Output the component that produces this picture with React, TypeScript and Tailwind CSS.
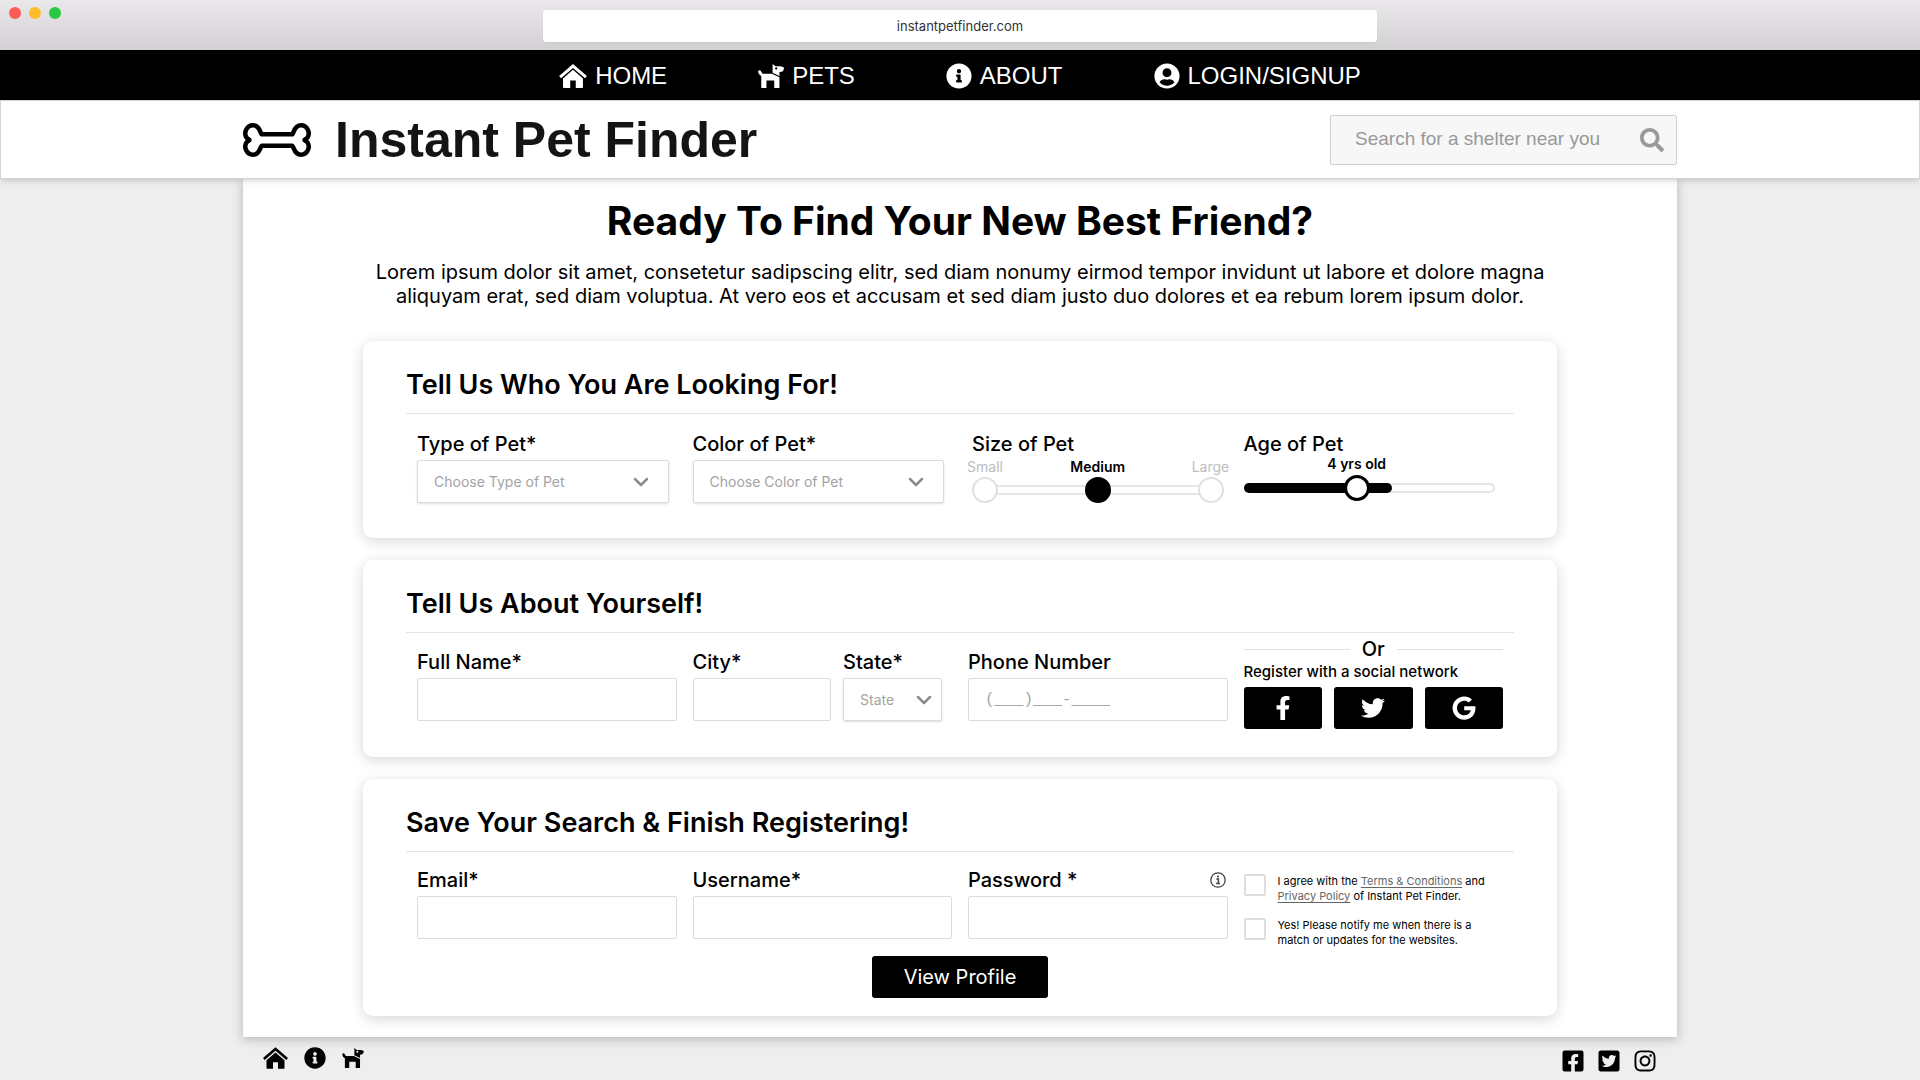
import { ReactNode } from "react";
import {
  FaFacebookF,
  FaFacebookSquare,
  FaGoogle,
  FaInfoCircle,
  FaInstagram,
  FaSearch,
  FaTwitter,
  FaTwitterSquare,
  FaUserCircle,
} from "react-icons/fa";
import { ChevronDown } from "lucide-react";

const inputClass =
  "block h-[43px] w-full rounded-xs border border-[#dcdcdc] bg-white px-4 text-base text-black placeholder:text-[#a8a8a8]";

function HouseIcon({ className }: { className?: string }) {
  return (
    <svg viewBox="0 0 30 26" className={className} fill="currentColor" aria-hidden="true">
      <path d="M15 0 0 13l2 2.4L15 4.2l13 11.2 2-2.4z" />
      <path d="M15 6.3 4.2 15.6V25q0 1 1 1H12v-8h6v8h6.800q1 0 1-1v-9.400z" />
    </svg>
  );
}

function DogIcon({ className }: { className?: string }) {
  return (
    <svg viewBox="0 0 80 74" className={className} fill="currentColor" fillRule="evenodd" aria-hidden="true">
      <path d="M2 20Q7 18 10 24L14 30H43L66 41V74H50V51H26V74H10V38Q1 32 0 24Z" />
      <path d="M45 0L54 7H70L80 11Q80 22 73 24L66 25V37L45 27ZM56 10a3.500 3.500 0 1 0 0.100 0Z" />
    </svg>
  );
}

function BoneIcon({ className }: { className?: string }) {
  return (
    <svg viewBox="0 0 68 34" className={className} fill="none" stroke="#000" strokeWidth="4.500" strokeLinejoin="round" aria-hidden="true">
      <path d="M19 11.300H49C51 11.300 50.500 2.300 58 2.300C64.500 2.300 67.500 10 64.500 14.500C63.500 16 61.500 16.500 61.500 17C61.500 17.500 63.500 18 64.500 19.500C67.500 24 64.500 31.700 58 31.700C50.500 31.700 51 22.700 49 22.700H19C17 22.700 17.500 31.700 10 31.700C3.500 31.700 0.500 24 3.500 19.500C4.500 18 6.500 17.500 6.500 17C6.500 16.500 4.500 16 3.500 14.500C0.500 10 3.500 2.300 10 2.300C17.500 2.300 17 11.300 19 11.300Z" />
    </svg>
  );
}

function InfoOutlineIcon({ className }: { className?: string }) {
  return (
    <svg viewBox="0 0 16 16" className={className} fill="none" stroke="currentColor" aria-hidden="true">
      <circle cx="8" cy="8" r="7.200" strokeWidth="1.300" />
      <path d="M6.300 7H8.400V11.300M6.100 11.500H10" strokeWidth="1.500" />
      <circle cx="8" cy="4.500" r="1.100" fill="currentColor" stroke="none" />
    </svg>
  );
}

function Card({ title, children }: { title: string; children: ReactNode }) {
  return (
    <section className="rounded-[10px] bg-white px-[43px] pt-6 pb-[18px] shadow-[0_3px_14px_rgba(0,0,0,0.16)]">
      <h3 className="text-[27px] leading-10 font-semibold">{title}</h3>
      <div className="mt-2 border-t border-[#e4e4e4] px-[11px]">{children}</div>
    </section>
  );
}

function Field({ id, label, children }: { id: string; label: string; children: ReactNode }) {
  return (
    <div>
      <label htmlFor={id} className="block text-xl leading-8 font-medium">
        {label}
      </label>
      {children}
    </div>
  );
}

function Select({ id, placeholder, compact }: { id: string; placeholder: string; compact?: boolean }) {
  return (
    <div className="relative">
      <select
        id={id}
        className="block h-[43px] w-full appearance-none rounded-xs border border-[#dcdcdc] bg-white px-4 text-sm text-[#a3a3a3] shadow-sm"
      >
        <option>{placeholder}</option>
      </select>
      <ChevronDown
        className={`pointer-events-none absolute top-2.5 h-6 w-6 text-[#8c8c8c] ${compact ? "right-1.5" : "right-4"}`}
        strokeWidth={2.5}
      />
    </div>
  );
}

function Header() {
  return (
    <header>
      {/* Browser bar */}
      <div className="flex h-[50px] items-start justify-center bg-linear-to-b from-[#eae8ea] to-[#d2d0d2]">
        <div className="absolute top-[7px] left-[9px] flex gap-2">
          <span className="h-3 w-3 rounded-full bg-[#fc5b57]" />
          <span className="h-3 w-3 rounded-full bg-[#fdbc2e]" />
          <span className="h-3 w-3 rounded-full bg-[#28c840]" />
        </div>
        <div className="mt-2.5 w-[834px] rounded-[3px] bg-white text-center text-[13px] leading-8 text-[#333] shadow-xs">
          instantpetfinder.com
        </div>
      </div>

      <nav className="flex h-[50px] items-center justify-center gap-[91px] bg-black pt-0.5 font-['Liberation_Sans',sans-serif] text-2xl text-white">
        <a href="#home" className="flex items-center gap-2">
          <HouseIcon className="h-6 w-7" />
          HOME
        </a>
        <a href="#pets" className="flex items-center gap-2">
          <DogIcon className="h-6 w-[26px]" />
          PETS
        </a>
        <a href="#about" className="flex items-center gap-2">
          <FaInfoCircle className="h-[26px] w-[26px]" />
          ABOUT
        </a>
        <a href="#login" className="flex items-center gap-2">
          <FaUserCircle className="h-[26px] w-[26px]" />
          LOGIN/SIGNUP
        </a>
      </nav>

      <div className="relative border border-[#d4d4d4] bg-white font-['Liberation_Sans',sans-serif] shadow-md">
        <div className="mx-auto flex h-[77px] max-w-[1434px] items-center justify-between">
          <a href="#home" className="flex items-center gap-6">
            <BoneIcon className="h-[34px] w-[68px]" />
            <h1 className="text-[50px] leading-none font-bold text-[#141414]">Instant Pet Finder</h1>
          </a>
          <div className="flex h-[50px] w-[347px] items-center rounded-xs border border-[#cfcfcf] bg-[#f7f7f7] pr-3 pl-6">
            <input
              type="text"
              aria-label="Search for a shelter near you"
              placeholder="Search for a shelter near you"
              className="min-w-0 flex-1 bg-transparent text-[19px] placeholder:text-[#999]"
            />
            <button type="button" aria-label="Search" className="text-[#999]">
              <FaSearch className="h-6 w-6" />
            </button>
          </div>
        </div>
      </div>
    </header>
  );
}

function SizePicker() {
  const sizes = ["Small", "Medium", "Large"];
  return (
    <fieldset>
      <legend className="pl-1 text-xl leading-8 font-medium">Size of Pet</legend>
      <div className="relative -mx-2 flex justify-between">
        <div className="absolute right-8 bottom-2 left-8 h-2.5 border-y-2 border-[#e6e6e6] bg-white" />
        {sizes.map((size) => (
          <label
            key={size}
            className="relative flex w-[50px] flex-col items-center text-sm leading-[14px] text-[#bdbdbd] has-checked:font-semibold has-checked:text-black"
          >
            {size}
            <input
              type="radio"
              name="size"
              defaultChecked={size === "Medium"}
              className="mt-[3px] h-[26px] w-[26px] appearance-none rounded-full border-2 border-[#e0e0e0] bg-white checked:border-black checked:bg-black"
            />
          </label>
        ))}
      </div>
    </fieldset>
  );
}

function AgeSlider() {
  return (
    <div className="pr-2">
      <label htmlFor="age" className="block text-xl leading-8 font-medium">
        Age of Pet
      </label>
      <div className="relative">
        <output htmlFor="age" className="absolute -top-1 left-[45%] -translate-x-1/2 text-sm leading-4 font-semibold whitespace-nowrap">
          4 yrs old
        </output>
        <div className="pt-[23px]">
          <div className="h-2.5 rounded-full border-2 border-[#e4e4e4] bg-white">
            <div className="-mt-0.5 -ml-0.5 h-2.5 w-3/5 rounded-full bg-black" />
          </div>
        </div>
        <input
          id="age"
          type="range"
          min={0}
          max={9}
          defaultValue={4}
          className="absolute top-[15px] left-0 h-[26px] w-full appearance-none bg-transparent [&::-webkit-slider-thumb]:h-[26px] [&::-webkit-slider-thumb]:w-[26px] [&::-webkit-slider-thumb]:appearance-none [&::-webkit-slider-thumb]:rounded-full [&::-webkit-slider-thumb]:border-3 [&::-webkit-slider-thumb]:border-black [&::-webkit-slider-thumb]:bg-white"
        />
      </div>
    </div>
  );
}

function SocialRegister() {
  const buttonClass = "flex h-[42px] flex-1 items-center justify-center rounded-[3px] bg-black text-white";
  return (
    <div>
      <div className="flex items-center gap-3 text-xl leading-6 font-medium">
        <hr className="flex-1 border-[#e0e0e0]" />
        Or
        <hr className="flex-1 border-[#e0e0e0]" />
      </div>
      <p className="text-[15px] leading-[22px] font-medium">Register with a social network</p>
      <div className="mt-1 flex gap-3">
        <button type="button" aria-label="Facebook" className={buttonClass}>
          <FaFacebookF className="h-6 w-6" />
        </button>
        <button type="button" aria-label="Twitter" className={buttonClass}>
          <FaTwitter className="h-6 w-6" />
        </button>
        <button type="button" aria-label="Google" className={buttonClass}>
          <FaGoogle className="h-6 w-6" />
        </button>
      </div>
    </div>
  );
}

function Footer() {
  return (
    <footer className="mx-auto flex max-w-[1434px] items-start justify-between px-5 pt-2.5">
      <div className="flex items-center gap-4">
        <a href="#home" aria-label="Home">
          <HouseIcon className="h-[22px] w-[25px]" />
        </a>
        <a href="#about" aria-label="About">
          <FaInfoCircle className="h-[22px] w-[22px]" />
        </a>
        <a href="#pets" aria-label="Pets">
          <DogIcon className="h-5 w-[22px]" />
        </a>
      </div>
      <div className="flex items-center gap-3 pt-0.5">
        <a href="#facebook" aria-label="Facebook">
          <FaFacebookSquare className="h-6 w-6" />
        </a>
        <a href="#twitter" aria-label="Twitter">
          <FaTwitterSquare className="h-6 w-6" />
        </a>
        <a href="#instagram" aria-label="Instagram">
          <FaInstagram className="h-6 w-6" />
        </a>
      </div>
    </footer>
  );
}

function App() {
  const checkboxClass = "h-[22px] w-[22px] shrink-0 appearance-none rounded-xs border-2 border-[#dedede] bg-white checked:bg-black";

  return (
    <div className="min-h-screen bg-[#eee] font-[Inter,sans-serif] text-black">
      <Header />

      <main className="mx-auto max-w-[1434px] bg-white px-[120px] pt-[18px] pb-[21px] shadow-[0_2px_10px_rgba(0,0,0,0.25)]">
        <h2 className="text-center text-[39px] leading-[48px] font-bold">Ready To Find Your New Best Friend?</h2>
        <p className="mt-[15px] text-center text-xl leading-6">
          Lorem ipsum dolor sit amet, consetetur sadipscing elitr, sed diam nonumy eirmod tempor invidunt ut labore et dolore magna
          <br />
          aliquyam erat, sed diam voluptua. At vero eos et accusam et sed diam justo duo dolores et ea rebum lorem ipsum dolor.
        </p>

        <form className="mt-[33px] flex flex-col gap-[22px]">
          <Card title="Tell Us Who You Are Looking For!">
            <div className="grid grid-cols-4 gap-4 pt-3.5 pb-[17px]">
              <div className="pr-2">
                <Field id="type" label="Type of Pet*">
                  <Select id="type" placeholder="Choose Type of Pet" />
                </Field>
              </div>
              <div className="pr-2">
                <Field id="color" label="Color of Pet*">
                  <Select id="color" placeholder="Choose Color of Pet" />
                </Field>
              </div>
              <SizePicker />
              <AgeSlider />
            </div>
          </Card>

          <Card title="Tell Us About Yourself!">
            <div className="grid grid-cols-4 items-end gap-4 pt-1 pb-2.5">
              <div className="pb-2">
                <Field id="name" label="Full Name*">
                  <input id="name" type="text" className={inputClass} />
                </Field>
              </div>
              <div className="grid grid-cols-[7fr_5fr] gap-3 pr-2.5 pb-2">
                <Field id="city" label="City*">
                  <input id="city" type="text" className={inputClass} />
                </Field>
                <Field id="state" label="State*">
                  <Select id="state" placeholder="State" compact />
                </Field>
              </div>
              <div className="pb-2">
                <Field id="phone" label="Phone Number">
                  <input
                    id="phone"
                    type="tel"
                    placeholder="(___)___-____"
                    className={`${inputClass} font-['Liberation_Mono',monospace]`}
                  />
                </Field>
              </div>
              <SocialRegister />
            </div>
          </Card>

          <Card title="Save Your Search & Finish Registering!">
            <div className="grid grid-cols-4 gap-4 pt-3">
              <Field id="email" label="Email*">
                <input id="email" type="email" className={inputClass} />
              </Field>
              <Field id="username" label="Username*">
                <input id="username" type="text" className={inputClass} />
              </Field>
              <div className="relative">
                <Field id="password" label="Password *">
                  <input id="password" type="password" className={inputClass} />
                </Field>
                <InfoOutlineIcon className="absolute top-2 right-0.5 h-4 w-4 text-[#444]" />
              </div>
              <div className="flex flex-col gap-3.5 pt-2.5 text-[11px] leading-[15px] whitespace-nowrap">
                <div className="flex gap-3">
                  <input id="terms" type="checkbox" className={checkboxClass} />
                  <label htmlFor="terms">
                    I agree with the{" "}
                    <a href="#terms" className="text-[#666] underline underline-offset-2">
                      Terms &amp; Conditions
                    </a>{" "}
                    and
                    <br />
                    <a href="#privacy" className="text-[#666] underline underline-offset-2">
                      Privacy Policy
                    </a>{" "}
                    of Instant Pet Finder.
                  </label>
                </div>
                <div className="flex gap-3">
                  <input id="notify" type="checkbox" className={checkboxClass} />
                  <label htmlFor="notify">
                    Yes! Please notify me when there is a
                    <br />
                    match or updates for the websites.
                  </label>
                </div>
              </div>
            </div>
            <button type="submit" className="mx-auto mt-2 block h-[42px] w-44 rounded-[3px] bg-black text-xl text-white">
              View Profile
            </button>
          </Card>
        </form>
      </main>

      <Footer />
    </div>
  );
}

export default App;
